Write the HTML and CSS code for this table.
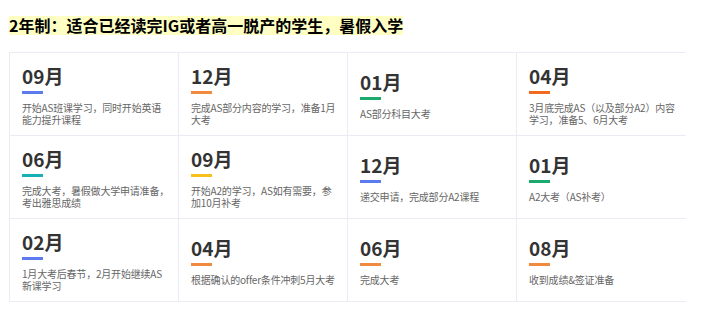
FILE: index.html
```html
<!DOCTYPE html>
<html lang="zh">
<head>
<meta charset="utf-8">
<link rel="stylesheet" href="styles.css">
</head>
<body>
<div class="page">
  <h2 class="heading"><span class="mark">2年制：适合已经读完IG或者高一脱产的学生，暑假入学</span></h2>
  <div class="grid">
    <div class="cell"><div class="month">09月</div><i class="bar blue"></i><p class="desc">开始AS班课学习，同时开始英语能力提升课程</p></div>
    <div class="cell"><div class="month">12月</div><i class="bar orange"></i><p class="desc">完成AS部分内容的学习，准备1月大考</p></div>
    <div class="cell"><div class="month">01月</div><i class="bar green"></i><p class="desc">AS部分科目大考</p></div>
    <div class="cell"><div class="month">04月</div><i class="bar red"></i><p class="desc">3月底完成AS（以及部分A2）内容学习，准备5、6月大考</p></div>

    <div class="cell"><div class="month">06月</div><i class="bar teal"></i><p class="desc">完成大考，暑假做大学申请准备，考出雅思成绩</p></div>
    <div class="cell"><div class="month">09月</div><i class="bar yellow"></i><p class="desc">开始A2的学习，AS如有需要，参加10月补考</p></div>
    <div class="cell"><div class="month">12月</div><i class="bar blue"></i><p class="desc">递交申请，完成部分A2课程</p></div>
    <div class="cell"><div class="month">01月</div><i class="bar green"></i><p class="desc">A2大考（AS补考）</p></div>

    <div class="cell"><div class="month">02月</div><i class="bar blue"></i><p class="desc">1月大考后春节，2月开始继续AS新课学习</p></div>
    <div class="cell"><div class="month">04月</div><i class="bar orange"></i><p class="desc">根据确认的offer条件冲刺5月大考</p></div>
    <div class="cell"><div class="month">06月</div><i class="bar orange"></i><p class="desc">完成大考</p></div>
    <div class="cell"><div class="month">08月</div><i class="bar orange"></i><p class="desc">收到成绩&amp;签证准备</p></div>
  </div>
</div>
</body>
</html>
```

FILE: styles.css
```css
html, body {
  margin: 0;
  padding: 0;
  background: #ffffff;
}

.page {
  padding: 16px 9px 0 9px;
  font-family: "Noto Sans CJK SC", "Noto Sans", sans-serif;
}

.heading {
  margin: 0;
  height: 19px;
  font-size: 16px;
  line-height: 19px;
  font-weight: bold;
  color: #000;
}

.mark {
  display: inline-block;
  background: #ffffc4;
}

.grid {
  margin-top: 17px;
  width: 676px;
  display: grid;
  grid-template-columns: repeat(4, 169px);
  grid-auto-rows: 83px;
  border-top: 1px solid #ebebf6;
  border-left: 1px solid #ebebf6;
  box-sizing: border-box;
}

.cell {
  display: flex;
  flex-direction: column;
  justify-content: center;
  align-items: flex-start;
  padding: 2px 8px 0 12px;
  border-right: 1px solid #ebebf6;
  border-bottom: 1px solid #ebebf6;
  box-sizing: border-box;
}

.cell:nth-child(4n) {
  border-right: none;
}

.month {
  font-size: 19px;
  line-height: 24px;
  font-weight: bold;
  color: #333;
}

.bar {
  display: block;
  width: 21px;
  height: 3px;
  margin-top: 3px;
}

.blue { background: #5b7bee; }
.orange { background: #ef8a3e; }
.green { background: #1caa6c; }
.red { background: #f26a1f; }
.teal { background: #17b0b6; }
.yellow { background: #f7c11c; }

.desc {
  margin: 8px 0 0 0;
  font-size: 10px;
  line-height: 12.5px;
  color: #666;
  letter-spacing: -0.2px;
}
```
